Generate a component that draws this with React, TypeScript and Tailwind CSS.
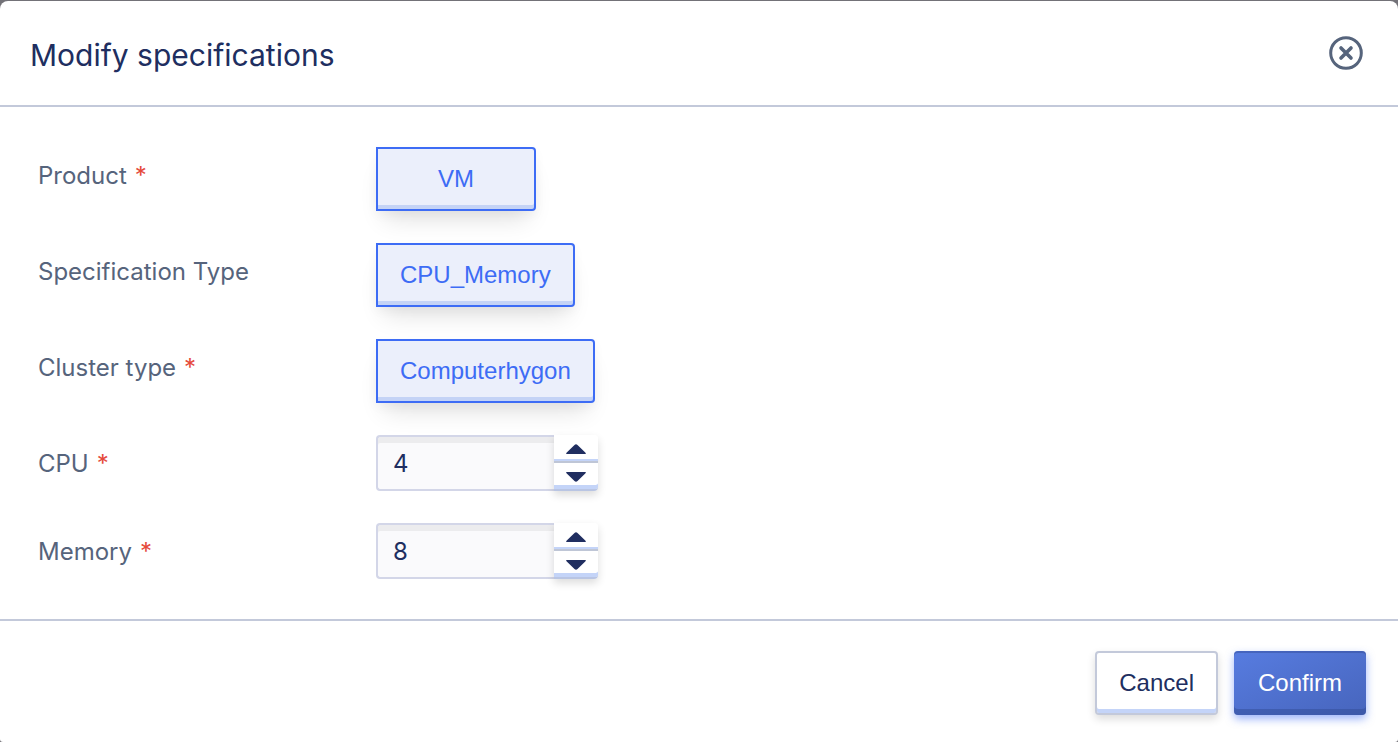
import { useState } from "react";
import type { ReactNode } from "react";

function FormRow({ label, htmlFor, required, children }: { label: string; htmlFor: string; required?: boolean; children: ReactNode }) {
  return (
    <div className="flex items-start">
      <label htmlFor={htmlFor} className="flex w-[338px] shrink-0 gap-2 pt-[2px] text-2xl leading-[54px] text-[#56647c]">
        {label}
        {required && <span className="text-[#e54a3b]">*</span>}
      </label>
      {children}
    </div>
  );
}

function Option({ id, children }: { id: string; children: ReactNode }) {
  return (
    <button
      id={id}
      type="button"
      aria-pressed="true"
      className="h-16 min-w-[160px] rounded-r-[4px] border-2 border-[#3d6cf5] bg-[#ebeffb] px-[22px] font-['Liberation_Sans',Arial,sans-serif] text-2xl text-[#3d6cf5] shadow-[inset_0_-4px_0_#c4d3f6,0_16px_24px_-8px_rgba(0,0,0,0.12),0_4px_12px_rgba(0,0,0,0.04)]"
    >
      {children}
    </button>
  );
}

function NumberField({ id, initial }: { id: string; initial: number }) {
  const [value, setValue] = useState(initial);
  return (
    <div className="flex h-14 w-[222px]">
      <input
        id={id}
        type="text"
        inputMode="numeric"
        value={value}
        onChange={(e) => setValue(Number(e.target.value) || 0)}
        className="min-w-0 flex-1 rounded-l-[4px] border-2 border-r-0 border-[#d3d6e8] bg-[#fafafc] px-[15px] pt-[2px] text-2xl text-[#202e60] shadow-[inset_0_6px_0_#ececee] outline-none"
      />
      <div className="flex w-11 flex-col rounded-r-[4px] shadow-[0_4px_8px_rgba(0,0,0,0.14)]">
        <button
          type="button"
          aria-label="Increase"
          onClick={() => setValue(value + 1)}
          className="flex h-7 items-center justify-center rounded-tr-[4px] border-b-2 border-[#bfc6d6] bg-white pt-[2px] shadow-[inset_0_-2px_0_#c4d4f8]"
        >
          <svg width="20" height="10" viewBox="0 0 20 10" fill="#202e60" aria-hidden="true">
            <path d="M.6 10Q-.3 9.8.5 8.8L8.5 1Q10-.6 11.5 1l8 7.8q.8 1-.1 1.2z" />
          </svg>
        </button>
        <button
          type="button"
          aria-label="Decrease"
          onClick={() => setValue(Math.max(0, value - 1))}
          className="flex h-7 items-center justify-center rounded-br-[4px] border-b-2 border-[#b9c5e3] bg-white pt-[2px] shadow-[inset_0_-4px_0_#c4d4f8]"
        >
          <svg width="20" height="10" viewBox="0 0 20 10" fill="#202e60" aria-hidden="true">
            <path d="M.6 0Q-.3.2.5 1.2L8.5 9Q10 10.6 11.5 9l8-7.8Q20.3.2 19.4 0z" />
          </svg>
        </button>
      </div>
    </div>
  );
}

export default function App() {
  return (
    <div className="flex min-h-screen flex-col bg-[#737278] pt-px font-[Inter,sans-serif]">
      <main className="flex flex-1 flex-col rounded-t-[8px] rounded-b-[3px] bg-white">
        <header className="flex h-[106px] items-center justify-between border-b-2 border-[#c3c9da] pr-[35px] pl-[30px]">
          <h1 className="pt-[3px] text-3xl leading-10 text-[#202e60]">Modify specifications</h1>
          <button type="button" aria-label="Close">
            <svg width="34" height="34" viewBox="0 0 34 34" fill="none" stroke="#56647c" aria-hidden="true">
              <circle cx="17" cy="17" r="15.3" strokeWidth="3" />
              <path d="m12 12 10 10m0-10L12 22" strokeWidth="3.6" strokeLinecap="round" />
            </svg>
          </button>
        </header>
        <form className="flex flex-col gap-8 border-b-2 border-[#c3c9da] py-10 pl-[38px]">
          <FormRow label="Product" htmlFor="product" required>
            <Option id="product">VM</Option>
          </FormRow>
          <FormRow label="Specification Type" htmlFor="specification">
            <Option id="specification">CPU_Memory</Option>
          </FormRow>
          <FormRow label="Cluster type" htmlFor="cluster" required>
            <Option id="cluster">Computerhygon</Option>
          </FormRow>
          <FormRow label="CPU" htmlFor="cpu" required>
            <NumberField id="cpu" initial={4} />
          </FormRow>
          <FormRow label="Memory" htmlFor="memory" required>
            <NumberField id="memory" initial={8} />
          </FormRow>
        </form>
        <footer className="flex justify-end gap-4 px-8 pt-[30px] pb-6 font-['Liberation_Sans',Arial,sans-serif] text-2xl">
          <button
            type="button"
            className="h-16 rounded-[4px] border-2 border-[#c3c9da] bg-white px-[22px] text-[#202e60] shadow-[inset_0_-4px_0_#c4d4f8,0_4px_8px_rgba(0,0,0,0.14)]"
          >
            Cancel
          </button>
          <button
            type="button"
            className="h-16 rounded-[4px] bg-linear-to-br from-[#577ce0] to-[#4765bd] px-6 text-white shadow-[inset_0_2px_0_rgba(50,75,150,0.45),inset_0_-6px_0_rgba(50,75,150,0.5),0_4px_8px_rgba(61,108,245,0.5)]"
          >
            Confirm
          </button>
        </footer>
      </main>
    </div>
  );
}
